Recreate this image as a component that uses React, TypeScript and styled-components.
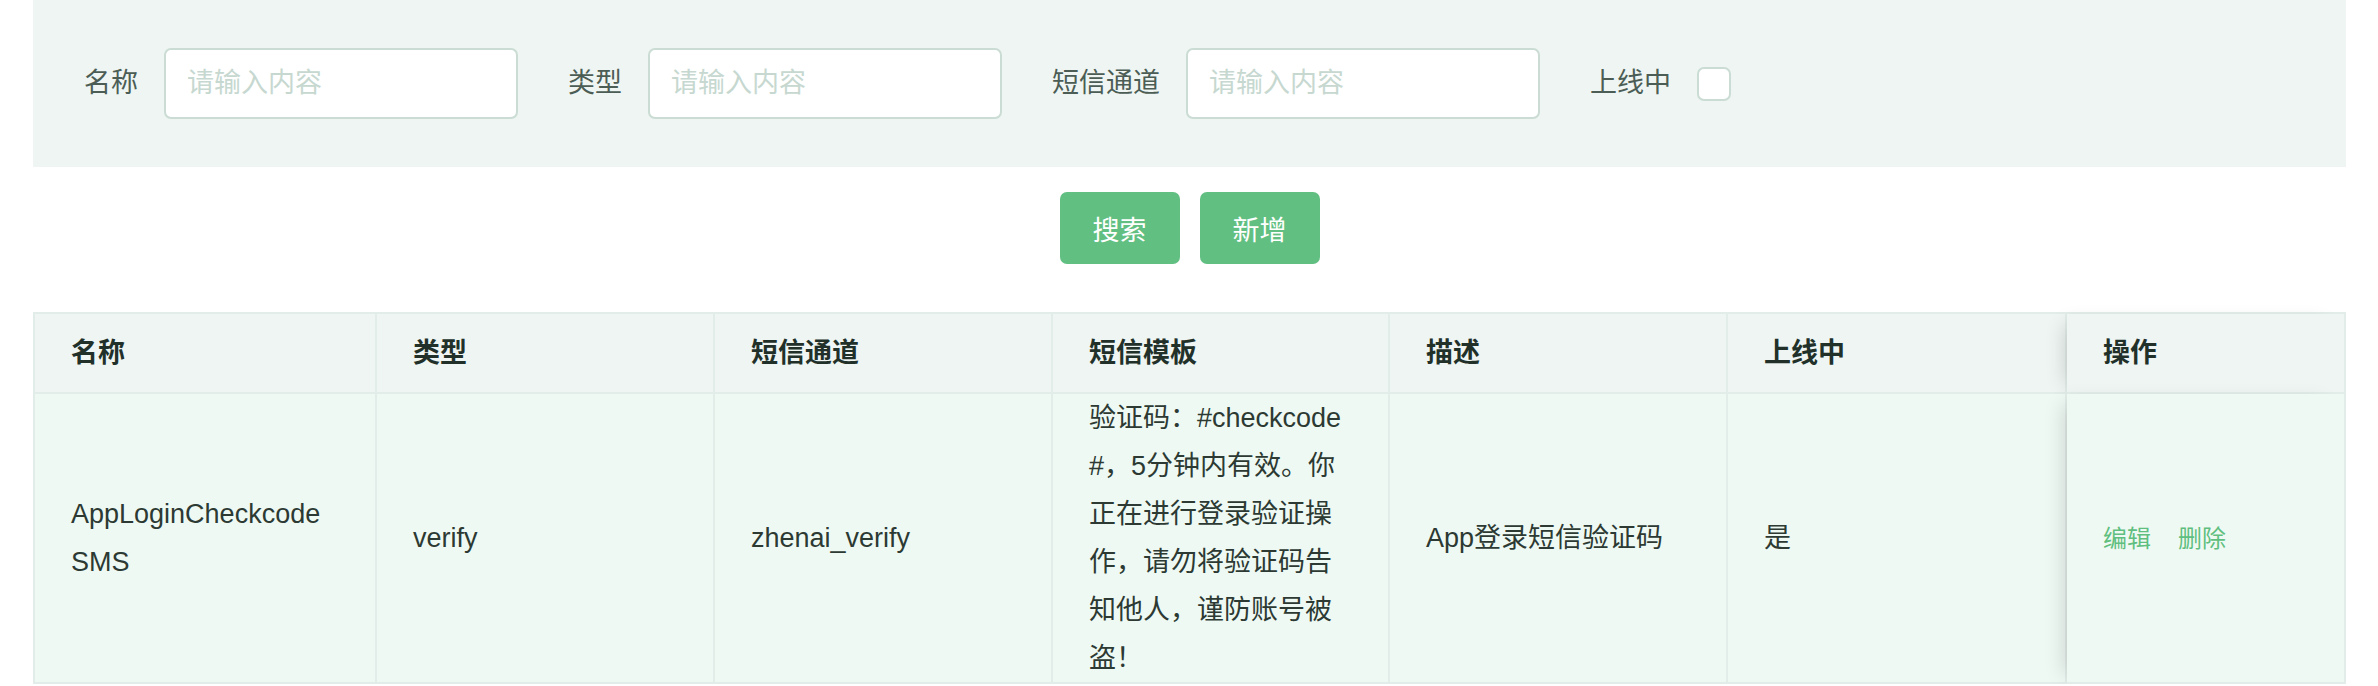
import React from "react";
import styled, { createGlobalStyle } from "styled-components";

const GlobalStyle = createGlobalStyle`
  html, body { margin: 0; padding: 0; background: #ffffff; }
  body { font-family: "Liberation Sans", "Noto Sans CJK SC", sans-serif; }
  * { box-sizing: border-box; }
`;

const Page = styled.div`
  padding: 0 32px 0 33px;
`;

const FilterPanel = styled.div`
  background: #eff5f2;
  height: 167px;
  padding: 0 51px;
  display: flex;
  align-items: center;
`;

const FormItem = styled.div`
  display: flex;
  align-items: center;
  margin-right: 50px;
`;

const Label = styled.label`
  font-size: 27px;
  line-height: 1;
  color: #4b5d55;
  margin-right: 26px;
  white-space: nowrap;
`;

const TextInput = styled.input`
  width: 354px;
  height: 71px;
  border: 2px solid #cadcd4;
  border-radius: 7px;
  padding: 0 21px;
  font-family: inherit;
  font-size: 27px;
  color: #2c3a33;
  background: #ffffff;
  outline: none;
  &::placeholder {
    color: #c6d8d0;
  }
`;

const CheckBox = styled.span`
  display: inline-block;
  width: 34px;
  height: 34px;
  border: 2px solid #cadcd4;
  border-radius: 7px;
  background: #ffffff;
`;

const Actions = styled.div`
  display: flex;
  justify-content: center;
  gap: 20px;
  padding: 25px 0 48px;
`;

const PrimaryButton = styled.button`
  width: 120px;
  height: 72px;
  padding: 0;
  border: none;
  border-radius: 7px;
  background: #62bf82;
  color: #ffffff;
  font-family: inherit;
  font-size: 27px;
  cursor: pointer;
`;

const Table = styled.table`
  width: 100%;
  table-layout: fixed;
  border-collapse: separate;
  border-spacing: 0;
  border-top: 2px solid #e2ece8;
  border-left: 2px solid #e2ece8;
`;

const Col = styled.col<{ $w?: number }>`
  width: ${(p) => (p.$w ? `${p.$w}px` : "auto")};
`;

const HeadCell = styled.th<{ $fixed?: boolean }>`
  padding: 15px 40px 15px 36px;
  line-height: 48px;
  font-size: 27px;
  font-weight: bold;
  text-align: left;
  color: #22302a;
  background: #eef5f2;
  border-right: 2px solid #e2ece8;
  border-bottom: 2px solid #e2ece8;
  box-shadow: ${(p) => (p.$fixed ? "-12px 0 20px -10px rgba(0, 0, 0, 0.16)" : "none")};
`;

const BodyCell = styled.td<{ $fixed?: boolean }>`
  padding: 0 40px 0 36px;
  line-height: 48px;
  font-size: 27px;
  color: #2c3a33;
  background: #eff9f3;
  vertical-align: middle;
  word-break: break-all;
  border-right: 2px solid #e2ece8;
  border-bottom: 2px solid #e2ece8;
  box-shadow: ${(p) => (p.$fixed ? "-12px 0 20px -10px rgba(0, 0, 0, 0.16)" : "none")};
`;

const LinkButton = styled.button`
  padding: 0;
  border: none;
  background: none;
  font-family: inherit;
  font-size: 24px;
  line-height: 48px;
  color: #5fbf80;
  cursor: pointer;
  & + & {
    margin-left: 27px;
  }
`;

const filters = [
  { label: "名称", type: "input" },
  { label: "类型", type: "input" },
  { label: "短信通道", type: "input" },
  { label: "上线中", type: "check" },
];

const columns = ["名称", "类型", "短信通道", "短信模板", "描述", "上线中"];
const widths = [342, 338, 338, 337, 338, 339];

const rows = [
  {
    name: "AppLoginCheckcodeSMS",
    type: "verify",
    channel: "zhenai_verify",
    template: "验证码：#checkcode#，5分钟内有效。你正在进行登录验证操作，请勿将验证码告知他人，谨防账号被盗！",
    desc: "App登录短信验证码",
    online: "是",
  },
];

export default function App() {
  return (
    <>
      <GlobalStyle />
      <Page>
        <FilterPanel>
          {filters.map((f) => (
            <FormItem key={f.label}>
              <Label>{f.label}</Label>
              {f.type === "input" ? <TextInput placeholder="请输入内容" /> : <CheckBox />}
            </FormItem>
          ))}
        </FilterPanel>
        <Actions>
          <PrimaryButton>搜索</PrimaryButton>
          <PrimaryButton>新增</PrimaryButton>
        </Actions>
        <Table>
          <colgroup>
            {widths.map((w, i) => (
              <Col key={i} $w={w} />
            ))}
            <Col />
          </colgroup>
          <thead>
            <tr>
              {columns.map((c) => (
                <HeadCell key={c}>{c}</HeadCell>
              ))}
              <HeadCell $fixed>操作</HeadCell>
            </tr>
          </thead>
          <tbody>
            {rows.map((r) => (
              <tr key={r.name}>
                <BodyCell>{r.name}</BodyCell>
                <BodyCell>{r.type}</BodyCell>
                <BodyCell>{r.channel}</BodyCell>
                <BodyCell>{r.template}</BodyCell>
                <BodyCell>{r.desc}</BodyCell>
                <BodyCell>{r.online}</BodyCell>
                <BodyCell $fixed>
                  <LinkButton>编辑</LinkButton>
                  <LinkButton>删除</LinkButton>
                </BodyCell>
              </tr>
            ))}
          </tbody>
        </Table>
      </Page>
    </>
  );
}
